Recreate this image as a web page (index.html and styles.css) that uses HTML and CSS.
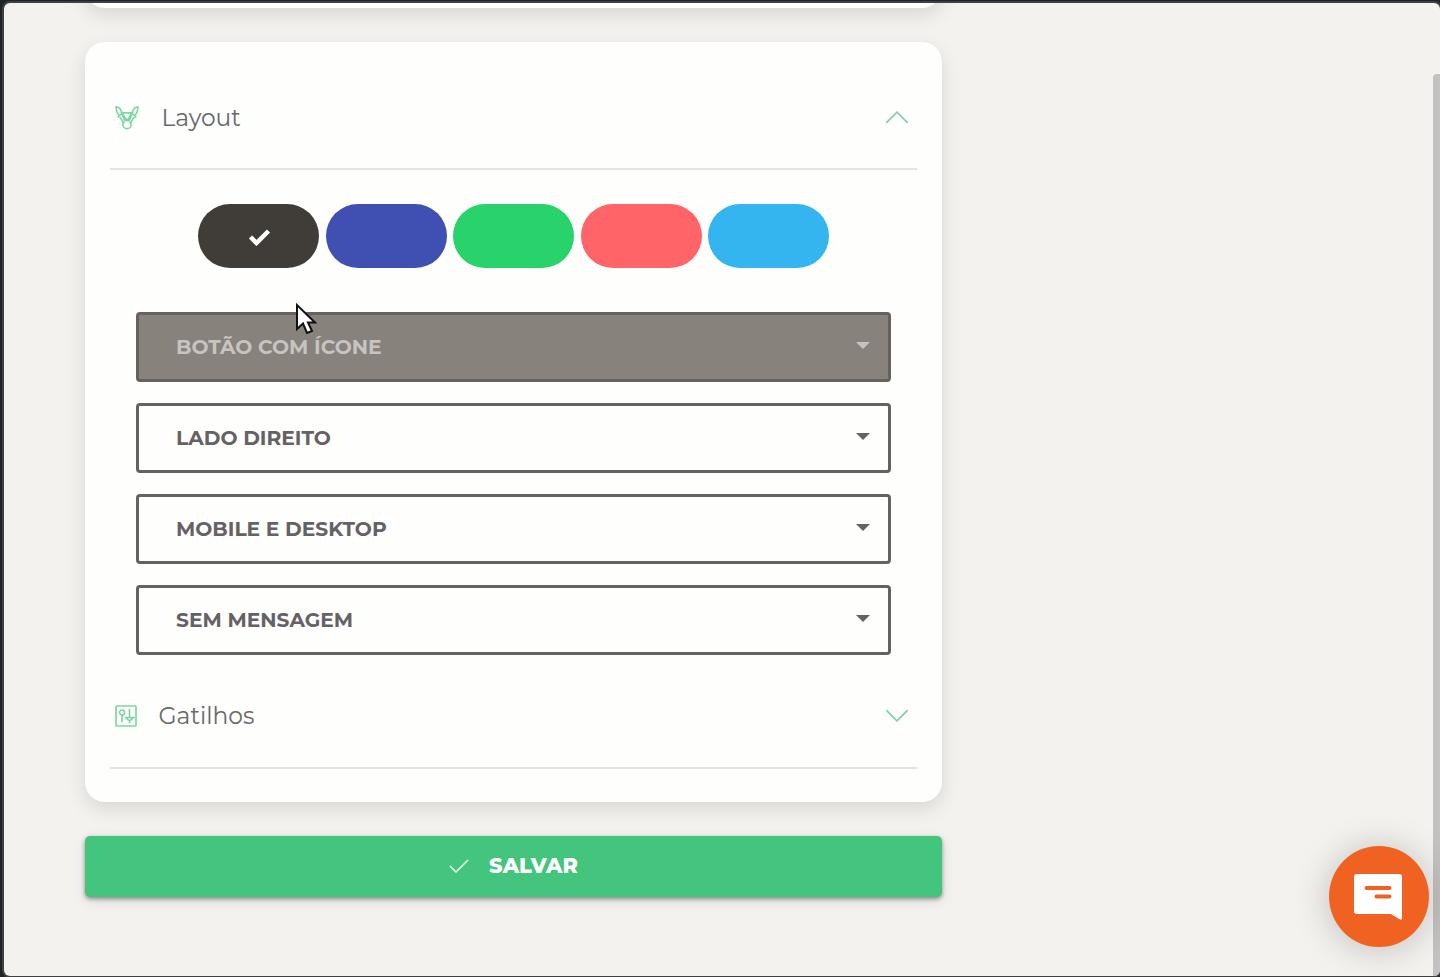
FILE: index.html
```html
<!DOCTYPE html>
<html lang="pt-BR">
<head>
<meta charset="utf-8">
<title>Layout</title>
<link rel="stylesheet" href="styles.css">
</head>
<body>
<div class="window">
  <main class="column">
    <div class="card previous-card"></div>
    <section class="card settings">
      <header class="section-head">
        <svg class="section-icon tools" viewBox="0 0 28 28"><path d="M2 2l4 2 8 14M2 2l1 6 8 13M26 2l-4 2-8 14M26 2l-1 6-8 13M8 9h12l-3 7h-6zM4 14l4-4M24 14l-4-4"/><circle cx="14" cy="21.5" r="4.5"/></svg>
        <h2 class="section-title">Layout</h2>
        <svg class="chevron" viewBox="0 0 24 14"><path d="M2 12L12 2l10 10"/></svg>
      </header>
      <div class="section-body">
        <div class="swatches">
          <button class="swatch graphite"><svg class="selected-check" viewBox="0 0 24 18"><path d="M3 9l6 6L21 3"/></svg></button>
          <button class="swatch indigo"></button>
          <button class="swatch green"></button>
          <button class="swatch coral"></button>
          <button class="swatch sky"></button>
        </div>
        <div class="selects">
          <button class="select filled"><span>BOTÃO COM ÍCONE</span><i class="caret"></i></button>
          <button class="select"><span>LADO DIREITO</span><i class="caret"></i></button>
          <button class="select"><span>MOBILE E DESKTOP</span><i class="caret"></i></button>
          <button class="select"><span>SEM MENSAGEM</span><i class="caret"></i></button>
        </div>
      </div>
      <header class="section-head triggers">
        <svg class="section-icon sliders" viewBox="0 0 24 24"><rect x="2" y="2" width="20" height="20" rx="1"/><path d="M8 10v8M15.500 5v9M15.500 18v1M12 13.500h7.500L15.500 17z"/><circle cx="8" cy="8.5" r="2.5"/></svg>
        <h2 class="section-title">Gatilhos</h2>
        <svg class="chevron" viewBox="0 0 24 14"><path d="M2 2l10 10L22 2"/></svg>
      </header>
    </section>
    <button class="save"><svg class="save-check" viewBox="0 0 20 14"><path d="M1 7l6 6L19 1"/></svg><span>SALVAR</span></button>
  </main>
  <div class="scrollbar"></div>
  <button class="chat" aria-label="Chat"><svg class="chat-icon" viewBox="0 0 48 48"><path class="bubble" d="M3 1h42q3 0 3 3v41q0 3-3 1l-8-5H3q-3 0-3-3V4q0-3 3-3z"/><path class="lines" d="M12.500 15h23M22.500 23.500h13"/></svg></button>
  <svg class="pointer" viewBox="0 0 22 34"><path d="M2 3v24l6-5.500 4 9.500 5-2-4-8.500h7z"/></svg>
</div>
</body>
</html>
```
FILE: styles.css
```css
* { box-sizing: border-box; }
body { margin: 0; width: 1440px; height: 977px; padding: 3px 0 1px 4px; overflow: hidden; background: #202226; font-family: Montserrat, Inter, "Open Sans", sans-serif; color: #66686c; }
button { font: inherit; border: 0; padding: 0; }
.window { position: relative; height: 973px; overflow: hidden; background: #f3f2ef; border-radius: 6px; box-shadow: 0 0 0 2px #3b4147; }
.column { width: 857px; margin-left: 81px; }
.card { background: #fefefd; border-radius: 20px; box-shadow: 0 7px 18px rgba(70, 65, 60, .15); }
.previous-card { height: 45px; margin-top: -40px; margin-bottom: 34px; }
.settings { height: 760px; padding: 25px; }
.section-head { display: flex; align-items: center; height: 103px; border-bottom: 2px solid #e4e3e1; padding: 0 7.500px 0 4px; }
.section-icon { fill: none; stroke: #7fd6a6; stroke-width: 1.7; flex: none; }
.tools { width: 26px; height: 27px; }
.sliders { width: 24px; height: 24px; }
.section-title { flex: 1; margin: 1px 0 0 21.500px; font-size: 23.400px; line-height: 30px; font-weight: 400; }
.triggers .section-title { margin-left: 20.500px; }
.chevron { width: 26px; height: 15px; fill: none; stroke: #86cbab; stroke-width: 1.6; }
.section-body { padding: 34px 26px 0; }
.swatches { display: flex; justify-content: center; gap: 6.500px; height: 64px; }
.swatch { width: 121px; height: 64px; border-radius: 32px; display: grid; place-items: center; }
.graphite { background: #403d38; }
.indigo { background: #3f50b2; }
.green { background: #28d36b; }
.coral { background: #ff6568; }
.sky { background: #35b5ef; }
.selected-check { width: 25px; height: 18px; margin: 1px 0 0 2px; fill: none; stroke: #fff; stroke-width: 4.500; }
.selects { display: grid; gap: 21px; margin-top: 44px; }
.select { display: flex; justify-content: space-between; align-items: center; height: 70px; padding: 0 18px 0 37px; background: transparent; color: #646265; border: 3px solid #66625f; border-radius: 4px; font-size: 20.200px; font-weight: 700; }
.select span { margin-top: -1px; }
.filled { background: #87827c; color: #c7c4c0; }
.caret { border: 7px solid transparent; border-top-color: currentColor; border-bottom: 0; margin-top: -3px; }
.triggers { margin-top: 9px; height: 105px; }
.save { display: flex; justify-content: center; align-items: center; width: 857px; height: 61px; margin-top: 34px; gap: 20px; padding-bottom: 2px; background: #44c57d; color: #fff; border-radius: 5px; box-shadow: 0 2px 4px rgba(0, 0, 0, .38), 0 4px 14px rgba(0, 0, 0, .1); font-size: 20.900px; font-weight: 800; }
.save-check { width: 20px; height: 14px; fill: none; stroke: #e3f7eb; stroke-width: 1.700; }
.scrollbar { position: absolute; right: 0; top: 71px; width: 7px; bottom: 0; background: #c3c2c0; border-radius: 4px 0 0; }
.chat { position: absolute; left: 1325px; top: 843px; width: 100px; height: 101px; display: grid; place-items: center; background: #ef6222; border-radius: 50%; box-shadow: 0 2px 36px rgba(0, 0, 0, .22); }
.chat-icon { width: 48px; height: 48px; margin-right: 2px; }
.bubble { fill: #fff; }
.lines { stroke: #ef6222; stroke-width: 4; stroke-linecap: round; }
.pointer { position: absolute; left: 291px; top: 299px; width: 22px; height: 34px; fill: #fff; stroke: #111; stroke-width: 2; }
```
